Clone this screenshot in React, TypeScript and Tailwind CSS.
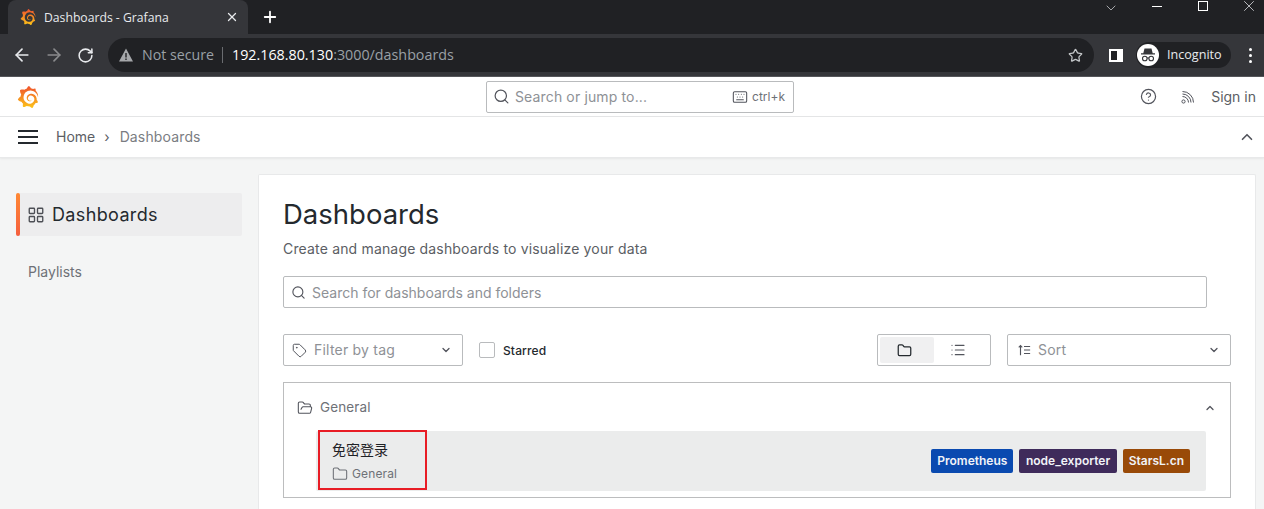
import {
  ArrowLeft,
  ArrowRight,
  ChevronDown,
  ChevronUp,
  CircleHelp,
  Folder,
  FolderOpen,
  Keyboard,
  LayoutGrid,
  List,
  Plus,
  RotateCw,
  Search,
  Star,
  Tag,
  X,
} from "lucide-react";
import { SiGrafana } from "react-icons/si";

function GrafanaLogo({ className }: { className: string }) {
  return <SiGrafana className={`fill-[url(#grafana-grad)] stroke-none ${className}`} />;
}

function ChromeBar() {
  return (
    <div className="font-['Open_Sans',sans-serif]">
      <div className="flex h-[34px] bg-[#202124]">
        <div className="ml-2 flex h-[34px] w-[240px] items-center rounded-t-lg bg-[#35363a] pl-[12px] pr-[9px] text-white">
          <GrafanaLogo className="h-4 w-4" />
          <span className="ml-2 mt-[2px] flex-1 text-[12.2px] text-[#e8eaed]">Dashboards - Grafana</span>
          <X className="h-[14px] w-[14px] text-[#e8eaed]" strokeWidth={2.2} />
        </div>
        <div className="ml-[13px] flex h-[34px] items-center">
          <Plus className="h-[18px] w-[18px] text-white" strokeWidth={2.4} />
        </div>
        <div className="ml-auto flex h-[12px] items-start text-[#e8eaed]">
          <ChevronDown className="h-4 w-4" strokeWidth={1} />
          <div className="ml-[33px] mt-[6px] h-px w-[10px] bg-white" />
          <div className="ml-[36px] mt-[1px] h-[10px] w-[10px] border border-white" />
          <X className="ml-[32px] mr-[6px] h-[18px] w-[18px] -translate-y-[3px]" strokeWidth={1} />
        </div>
      </div>
      <div className="flex h-[42px] items-center bg-[#35363a] pl-[12px] pr-[8px]">
        <ArrowLeft className="h-[20px] w-[20px] text-[#e8eaed]" strokeWidth={2} />
        <ArrowRight className="ml-[12px] h-[20px] w-[20px] text-[#8a8b8d]" strokeWidth={2} />
        <RotateCw className="ml-[13px] h-[17px] w-[17px] text-[#e8eaed]" strokeWidth={2.2} />
        <div className="ml-[14px] flex h-[34px] w-[986px] items-center rounded-full bg-[#202124] pl-[10px] pr-[11px]">
          <svg viewBox="0 0 16 16" className="h-4 w-4 fill-[#a5a7aa]">
            <path d="M8 1.5 15 14.5H1ZM7.3 6v4.6h1.4V6Zm0 5.6v1.4h1.4v-1.4Z" fillRule="evenodd" />
          </svg>
          <span className="ml-[8px] text-[14.2px] text-[#9aa0a6]">Not secure</span>
          <div className="ml-[8px] h-4 w-px bg-[#6a6c70]" />
          <span className="ml-[9px] text-[14.3px] text-white">192.168.80.130</span>
          <span className="text-[14.3px] text-[#9aa0a6]">:3000/dashboards</span>
          <Star className="ml-auto h-[15px] w-[15px] text-[#c4c7c9]" strokeWidth={2} />
        </div>
        <div className="ml-[15px] flex h-[13px] w-[14px] border-2 border-white bg-[#202124]">
          <div className="ml-auto w-[4px] bg-white" />
        </div>
        <div className="ml-[13px] flex h-[26px] w-[95px] items-center rounded-full bg-[#202124] pl-px">
          <div className="flex h-[22px] w-[22px] items-center justify-center rounded-full bg-white">
            <svg viewBox="0 0 22 22" className="h-[22px] w-[22px]">
              <path d="M7.5 4.5h7l1.2 4.7H18v1.2H4V9.200h2.300Z" fill="#35363a" />
              <circle cx="7.800" cy="14.500" r="2.300" fill="none" stroke="#35363a" strokeWidth="1.100" />
              <circle cx="14.200" cy="14.500" r="2.300" fill="none" stroke="#35363a" strokeWidth="1.100" />
              <path d="M10 14h2" stroke="#35363a" strokeWidth="1" />
            </svg>
          </div>
          <span className="ml-[8px] text-[12.6px] text-[#e8eaed]">Incognito</span>
        </div>
        <div className="ml-[18px] flex flex-col gap-[3px]">
          <div className="h-[3px] w-[3px] rounded-full bg-white" />
          <div className="h-[3px] w-[3px] rounded-full bg-white" />
          <div className="h-[3px] w-[3px] rounded-full bg-white" />
        </div>
      </div>
      <div className="h-px bg-[#55565a]" />
    </div>
  );
}

function RssIcon() {
  return (
    <svg viewBox="0 0 14 14" className="h-[14px] w-[14px] fill-none stroke-[#52545c]" strokeWidth="1">
      <circle cx="2.500" cy="11.500" r="1.600" />
      <path d="M1.500 6.500a6 6 0 0 1 6 6M1.500 4a8.500 8.500 0 0 1 8.500 8.500M1.500 1.500a11 11 0 0 1 11 11" />
    </svg>
  );
}

function TopNav() {
  return (
    <>
      <div className="relative flex h-[40px] items-center border-b border-[#e4e5e6] bg-white pl-[17px] pr-[8px]">
        <GrafanaLogo className="h-[22px] w-[22px]" />
        <div className="ml-[447px] flex h-8 w-[308px] items-center rounded-[2px] border border-[#b9bbbd] pl-[6px] pr-[8px]">
          <Search className="h-[17px] w-[17px] text-[#52545c]" strokeWidth={1.7} />
          <span className="ml-[5px] flex-1 text-sm tracking-[0.01em] text-[#8e9196]">Search or jump to...</span>
          <Keyboard className="h-4 w-4 text-[#52545c]" strokeWidth={1.6} />
          <span className="ml-[4px] text-xs text-[#6e7177]">ctrl+k</span>
        </div>
        <CircleHelp className="ml-auto h-[17px] w-[17px] text-[#52545c]" strokeWidth={1.7} />
        <div className="ml-[24px]">
          <RssIcon />
        </div>
        <span className="ml-[16px] text-sm text-[#5b5e64]">Sign in</span>
      </div>
      <div className="flex h-[41px] items-center border-b border-[#e8e9ea] bg-white pl-[18px] pr-[8px] shadow-[0_1px_2px_rgba(0,0,0,0.06)]">
        <div className="flex w-5 flex-col gap-[4px]">
          <div className="h-[2px] bg-[#24292e]" />
          <div className="h-[2px] bg-[#24292e]" />
          <div className="h-[2px] bg-[#24292e]" />
        </div>
        <span className="ml-[18px] text-sm text-[#5b5e64]">Home</span>
        <span className="ml-[9px] text-sm text-[#5b5e64]">›</span>
        <span className="ml-[10px] text-sm tracking-[0.01em] text-[#7a7d82]">Dashboards</span>
        <ChevronUp className="ml-auto h-[18px] w-[18px] text-[#52545c]" strokeWidth={2.2} />
      </div>
    </>
  );
}

function Sidebar() {
  return (
    <div className="w-[258px] shrink-0 pl-4 pr-[16px] pt-[19px]">
      <div className="flex h-[43px] items-center rounded-[2px] bg-[#ededee]">
        <div className="h-full w-1 rounded-[2px] bg-gradient-to-b from-[#ff8833] to-[#f55f3e]" />
        <LayoutGrid className="ml-[7px] h-[18px] w-[18px] text-[#4d4f55]" strokeWidth={1.8} />
        <span className="ml-[7px] text-lg leading-none tracking-[0.02em] text-[#24292e]">Dashboards</span>
      </div>
      <div className="mt-[28px] pl-3 text-sm leading-4 text-[#6e7177]">Playlists</div>
    </div>
  );
}

function Badge({ label, className }: { label: string; className: string }) {
  return (
    <span className={`flex h-6 items-center rounded-[2px] text-xs font-semibold text-[#f1f3f8] ${className}`}>
      {label}
    </span>
  );
}

function SortIcon() {
  return (
    <svg viewBox="0 0 16 16" className="h-[14px] w-[14px] fill-none stroke-[#52545c]" strokeWidth="1.3">
      <path d="M4 14V3M2 5l2-2 2 2M8 4h7M8 8h7M8 12h7" />
    </svg>
  );
}

function Content() {
  return (
    <div className="mr-2 flex-1 rounded-t-[2px] border border-b-0 border-[#e8e9ea] bg-white pl-6 pr-6 pt-[20px]">
      <h1 className="text-[27.500px] leading-[38px] font-normal text-[#24292e]">Dashboards</h1>
      <p className="mt-[7px] text-sm leading-[18px] tracking-[0.012em] text-[#5b5e64]">Create and manage dashboards to visualize your data</p>
      <div className="mt-[18px] flex h-8 w-[924px] items-center rounded-[2px] border border-[#b9bbbd] pl-[7px]">
        <Search className="h-[15px] w-[15px] text-[#52545c]" strokeWidth={1.8} />
        <span className="ml-[6px] mt-[2px] text-sm text-[#8e9196]">Search for dashboards and folders</span>
      </div>
      <div className="mt-[26px] flex h-8 items-center">
        <div className="flex h-8 w-[180px] items-center rounded-[2px] border border-[#b9bbbd] pl-[8px] pr-[10px]">
          <Tag className="h-[15px] w-[15px] text-[#52545c]" strokeWidth={1.6} />
          <span className="ml-[7px] flex-1 text-sm tracking-[0.015em] text-[#8e9196]">Filter by tag</span>
          <ChevronDown className="h-3 w-3 text-[#52545c]" strokeWidth={2.6} />
        </div>
        <div className="ml-4 h-4 w-4 rounded-[2px] border border-[#b9bbbd]" />
        <span className="ml-2 mt-px text-xs font-medium tracking-[0.01em] text-[#24292e]">Starred</span>
        <div className="ml-auto flex h-8 w-[114px] items-center rounded-[2px] border border-[#b9bbbd] p-[2px]">
          <div className="flex h-[26px] w-[54px] items-center justify-center rounded-[2px] bg-[#f0f0f1] pr-[6px]">
            <Folder className="h-[15px] w-[15px] text-[#24292e]" strokeWidth={2} />
          </div>
          <div className="flex h-[26px] w-[54px] items-center justify-center pr-[6px]">
            <List className="h-[16px] w-[16px] text-[#52545c]" strokeWidth={1.8} />
          </div>
        </div>
        <div className="ml-4 flex h-8 w-[224px] items-center rounded-[2px] border border-[#b9bbbd] pl-[9px] pr-[10px]">
          <SortIcon />
          <span className="ml-[7px] flex-1 text-sm tracking-[0.015em] text-[#8e9196]">Sort</span>
          <ChevronDown className="h-3 w-3 text-[#52545c]" strokeWidth={2.6} />
        </div>
      </div>
      <div className="mt-4 h-[116px] border border-[#bcbdbe] pl-[32px] pr-[24px]">
        <div className="-ml-[19px] -mr-[10px] flex h-[48px] items-center pt-px">
          <FolderOpen className="h-[16px] w-[16px] text-[#52545c]" strokeWidth={1.6} />
          <span className="ml-[7px] flex-1 text-[13.500px] tracking-[0.01em] text-[#6e7177]">General</span>
          <ChevronUp className="h-3 w-3 text-[#52545c]" strokeWidth={2.6} />
        </div>
        <div className="relative flex h-[60px] items-center justify-between rounded-[2px] bg-[#ebecec] pl-[16px] pr-[16px]">
          <div>
            <div className="font-['Noto_Sans_CJK_SC',sans-serif] text-sm leading-[18px] text-[#1e2126]">免密登录</div>
            <div className="mt-[8px] flex items-center text-[#6e7177]">
              <Folder className="h-4 w-4 text-[#6e7177]" strokeWidth={1.6} />
              <span className="ml-[4px] text-xs tracking-[0.01em]">General</span>
            </div>
          </div>
          <div className="flex gap-[6px]">
            <Badge label="Prometheus" className="bg-[#0a4ab0] px-[6px]" />
            <Badge label="node_exporter" className="bg-[#3f2b5b] px-[6.500px]" />
            <Badge label="StarsL.cn" className="bg-[#994a08] px-[6px]" />
          </div>
          <div className="absolute left-[2px] top-[-1px] h-[60px] w-[109px] border-2 border-[#e81c25]" />
        </div>
      </div>
    </div>
  );
}

export default function App() {
  return (
    <div className="flex h-[509px] w-[1264px] flex-col overflow-hidden bg-[#f4f5f5] font-['Inter',sans-serif]">
      <svg className="absolute h-0 w-0">
        <defs>
          <linearGradient id="grafana-grad" x1="0" y1="1" x2="0" y2="0">
            <stop offset="0" stopColor="#fcc419" />
            <stop offset="1" stopColor="#f0512d" />
          </linearGradient>
        </defs>
      </svg>
      <ChromeBar />
      <TopNav />
      <div className="flex min-h-0 flex-1 pt-4">
        <Sidebar />
        <Content />
      </div>
    </div>
  );
}
